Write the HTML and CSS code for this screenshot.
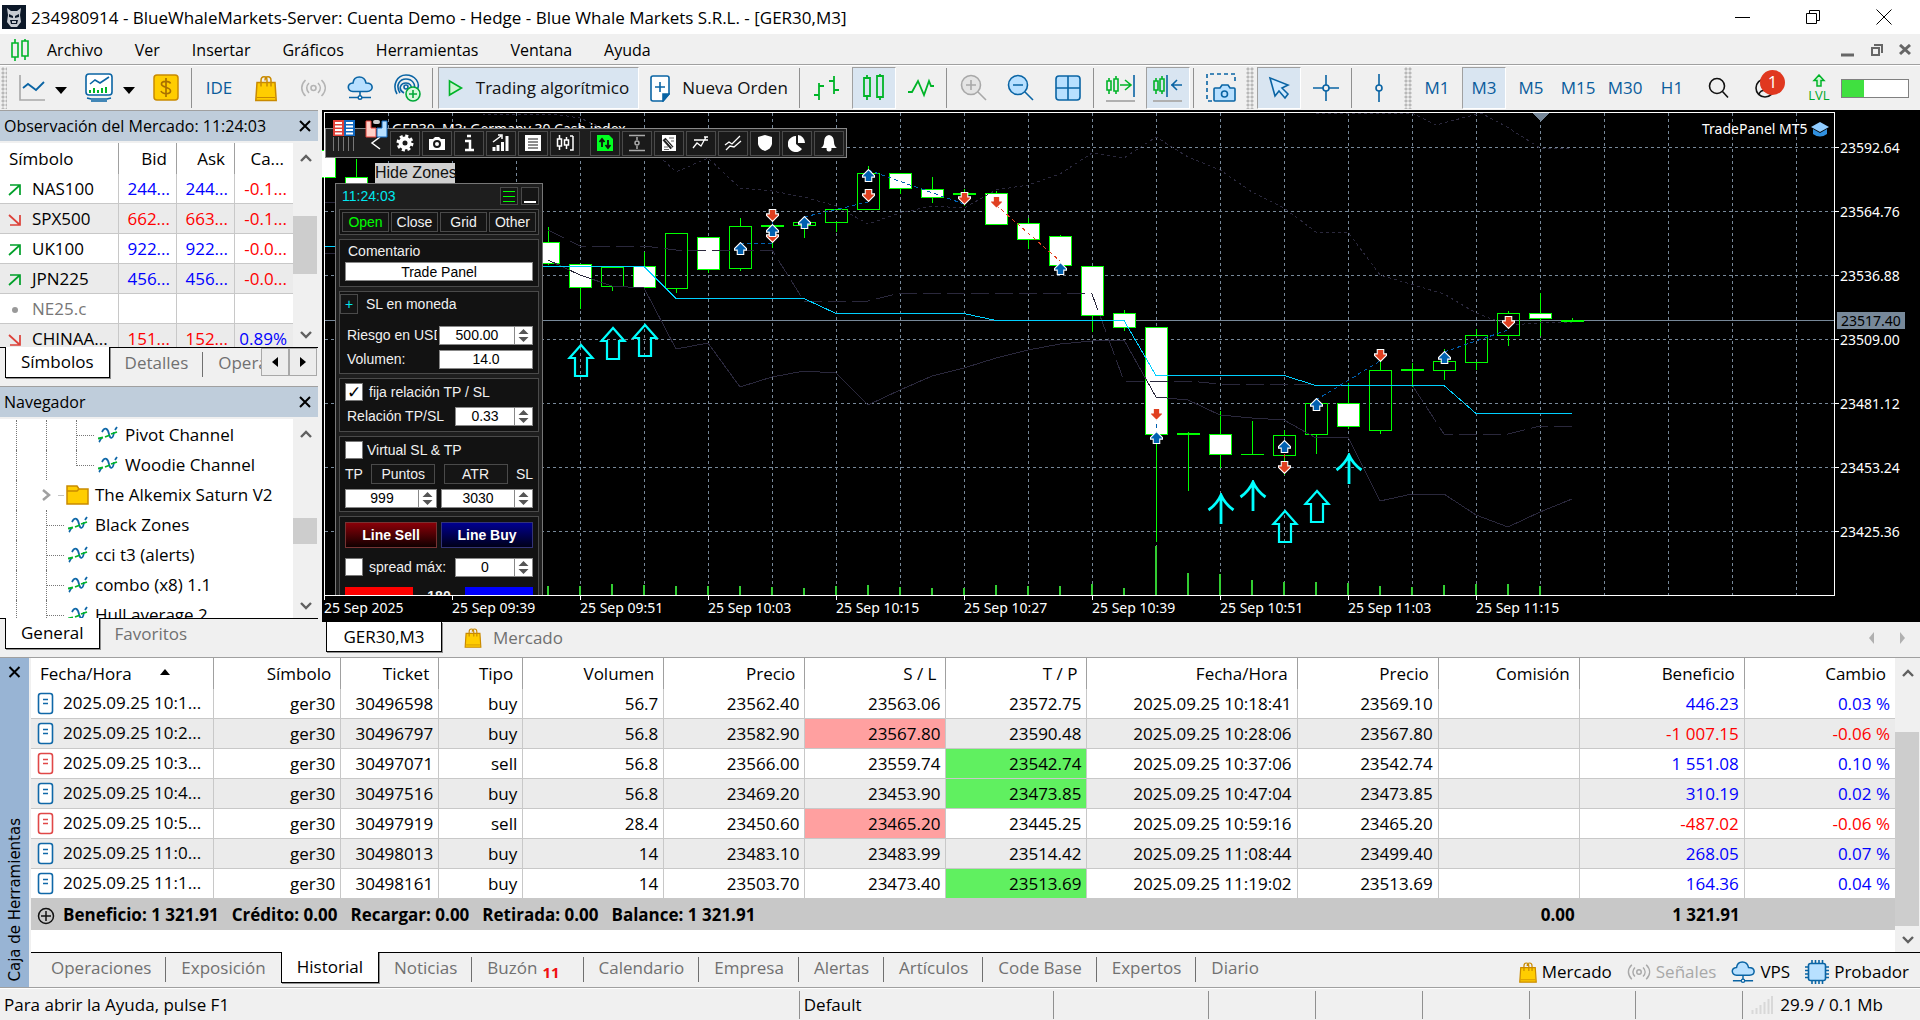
FILE: index.html
```html
<!DOCTYPE html>
<html lang="es">
<head>
<meta charset="utf-8">
<title>234980914 - BlueWhaleMarkets-Server</title>
<link rel="stylesheet" href="styles.css">
</head>
<body>
<svg class="defs" width="0" height="0" aria-hidden="true">
  <defs>
    <symbol id="bag" viewBox="0 0 22 26"><path d="M2 7h18l1.200 18H.8z" fill="#ffcd00" stroke="#c98a00" stroke-width="1.500"/><path d="M6 11V5c0-5 6-5 6 0v6M10 5c0-5 6-5 6 0v6" fill="none" stroke="#c98a00" stroke-width="1.500"/><path d="M2 22h18" stroke="#c98a00"/></symbol>
    <symbol id="signal" viewBox="0 0 26 20"><g fill="none" stroke="currentColor" stroke-width="1.600"><circle cx="13" cy="10" r="2.500"/><path d="M8.500 5c-3 3-3 7 0 10M17.500 5c3 3 3 7 0 10M5 2c-5 5-5 11 0 16M21 2c5 5 5 11 0 16"/></g></symbol>
    <symbol id="cloud" viewBox="0 0 26 24"><path d="M6 15.500c-6-.5-6.500-8 0-8.500 1-8 11.500-8 13 0 8 0 8 8 1 8.500z" fill="#b8e0ff" stroke="#0a64a4" stroke-width="1.600"/><path d="M13 16v4M2 21.500h9M15 21.500h9" stroke="#0a64a4" stroke-width="1.600"/><circle cx="13" cy="21.500" r="1.800" fill="#fff" stroke="#0a64a4" stroke-width="1.400"/></symbol>
    <symbol id="chip" viewBox="0 0 24 24"><path d="M7 0v24M10.500 0v24M14 0v24M17.500 0v24M0 7h24M0 10.500h24M0 14h24M0 17.500h24" stroke="#0a64a4" stroke-width="1.600"/><rect x="3.500" y="3.500" width="17" height="17" rx="2" fill="#b8e0ff" stroke="#0a64a4" stroke-width="1.600"/></symbol>
    <symbol id="doc" viewBox="0 0 18 24"><rect x="1.500" y="1.500" width="14" height="20" rx="2.500" fill="#fff" stroke="currentColor" stroke-width="1.600"/><path d="M6 7.500h5M6 11.500h5" stroke="currentColor" stroke-width="1.500"/></symbol>
    <symbol id="ind" viewBox="0 0 20 18"><path d="M1 16c1-1 1-3 3-4M4 6c3-6 6-3 7 2s4 6 5-2M17 4l2-3" fill="none" stroke="#1068a8" stroke-width="1.800"/><path d="M0 12.500l5-1M7 11l5-2M13 8l6-2" fill="none" stroke="#00b428" stroke-width="1.800"/></symbol>
    <symbol id="up" viewBox="0 0 12 12"><path d="M6 .5l5.500 5.500v1.500H9v4H3v-4H.5V6z" fill="#0060b0" stroke="#fff"/></symbol>
    <symbol id="down" viewBox="0 0 12 12"><path d="M6 11.500L.5 6V4.500H3v-4h6v4h2.500V6z" fill="#e04020" stroke="#fff"/></symbol>
    <symbol id="spin" viewBox="0 0 16 17"><path d="M3 7l5-5 5 5zM3 10l5 5 5-5z" fill="#555"/></symbol>
    <symbol id="nw" viewBox="0 0 14 14"><path d="M2 2h10v10M12 2L1 12" fill="none" stroke="#00a02a" stroke-width="1.700"/></symbol>
    <symbol id="sw" viewBox="0 0 14 14"><path d="M2 12h10V2M12 12L1 2" fill="none" stroke="#dd4038" stroke-width="1.700"/></symbol>
    <symbol id="chev" viewBox="0 0 12 8"><path d="M1 7l5-5 5 5" fill="none" stroke="#606060" stroke-width="2.400"/></symbol>
    <symbol id="close" viewBox="0 0 12 12"><path d="M1 1l10 10M11 1L1 11" stroke="currentColor" stroke-width="2"/></symbol>
    <symbol id="outarrow" viewBox="0 0 28 35"><path d="M14 2L2.500 15H8v18h12V15h5.500z" fill="none" stroke="#00ffff" stroke-width="2.200"/></symbol>
    <symbol id="linearrow" viewBox="0 0 28 31"><path d="M14 2v29M1.500 17C7 13 11 9 14 2c3 7 7 11 12.500 15" fill="none" stroke="#00ffff" stroke-width="2.800"/></symbol>
  </defs>
</svg>

<header class="titlebar">
  <svg class="app-icon" viewBox="0 0 24 24"><rect width="24" height="24" fill="#0c1828"/><path d="M5 3l4 3h6l4-3-1 7 1 7-4 5H9l-4-5 1-7z" fill="#c8ccd2"/><path d="M7 9l4 2v2l-4-1zM17 9l-4 2v2l4-1zM8 15h8l-1 4H9z" fill="#0c1828"/><path d="M10 16h4v2h-4z" fill="#c8ccd2"/></svg>
  <h1>234980914 - BlueWhaleMarkets-Server: Cuenta Demo - Hedge - Blue Whale Markets S.R.L. - [GER30,M3]</h1>
  <div class="win-buttons">
    <button aria-label="Minimizar"><svg width="16" height="16"><path d="M0 8.500h15" stroke="#000"/></svg></button>
    <button aria-label="Restaurar"><svg width="16" height="16" fill="none" stroke="#000"><path d="M1.500 4.500h10v10h-10zM4.500 4V1.500h10v10H12"/></svg></button>
    <button aria-label="Cerrar"><svg width="16" height="16"><path d="M.5.500l15 15M15.500.500l-15 15" stroke="#000"/></svg></button>
  </div>
</header>

<nav class="menubar">
  <svg class="menu-icon" viewBox="0 0 18 22" fill="none" stroke="#00b428" stroke-width="1.600"><path d="M4 0v4M4 18v4M14 0v2M14 17v4M1 4h6v14H1zM11 2h6v15h-6z"/></svg>
  <button>Archivo</button><button>Ver</button><button>Insertar</button><button>Gráficos</button><button>Herramientas</button><button>Ventana</button><button>Ayuda</button>
  <div class="mdi-buttons">
    <button aria-label="Minimizar gráfico"><svg width="14" height="14"><path d="M0 12h13" stroke="#666" stroke-width="3"/></svg></button>
    <button aria-label="Restaurar gráfico"><svg width="14" height="14" fill="none" stroke="#666" stroke-width="2"><path d="M2 5h7v7H2zM4 2h8v8"/></svg></button>
    <button aria-label="Cerrar gráfico"><svg width="13" height="12"><path d="M1 1l10 9M11 1L1 10" stroke="#666" stroke-width="3"/></svg></button>
  </div>
</nav>

<div class="toolbar">
  <span class="grip narrow"></span>
  <button class="tb wide" aria-label="Tipo de gráfico"><svg width="28" height="28" viewBox="0 0 28 28" fill="none"><path d="M2 1v25h25" stroke="#a8a8a8" stroke-width="1.600"/><path d="M5 14l5-4 8 6 8-8" stroke="#0a64a4" stroke-width="1.800"/></svg><i class="tri"></i></button>
  <button class="tb wide" aria-label="Indicadores"><svg width="30" height="30" viewBox="0 0 30 30" fill="none" stroke="#0a64a4" stroke-width="1.600"><rect x="2" y="1" width="26" height="21" rx="3" fill="#fff"/><path d="M3 25l4 1h16l4-1M7 28h16"/><path d="M6 11l5-4 5 3 9-6"/><path d="M6 20v-3M10 20v-5M14 20v-3M18 20v-5M22 20v-6" stroke="#00b428" stroke-width="2"/></svg><i class="tri"></i></button>
  <button class="tb" aria-label="Mercado"><svg width="26" height="28" viewBox="0 0 26 28"><rect x="1" y="1" width="24" height="25" rx="3" fill="#ffcd00" stroke="#c98a00" stroke-width="1.500"/><path d="M17.500 9.500c-1-3-9-3-9 .5 0 4 9 2.500 9 7 0 3.500-8 3.500-9.500 0M13 4v19" fill="none" stroke="#a87000" stroke-width="1.700"/></svg></button>
  <span class="sep"></span>
  <button class="tb">IDE</button>
  <button class="tb" aria-label="Tienda"><svg width="22" height="27"><use href="#bag"/></svg></button>
  <button class="tb off" aria-label="Señales"><svg width="27" height="20"><use href="#signal"/></svg></button>
  <button class="tb" aria-label="VPS"><svg width="26" height="24"><use href="#cloud"/></svg></button>
  <button class="tb" aria-label="Señal nueva"><svg width="28" height="28" viewBox="0 0 28 28" fill="none" stroke="#0a64a4" stroke-width="1.600"><path d="M4 20C-1 11 4 1 13 1s15 8 11 15M7 19C2 11 7 5 13 5s10 5 8 10M11 19c-7-4-3-10 2-10 4 0 6 3 5 6"/><circle cx="13" cy="13" r="2"/><circle cx="20" cy="20" r="7" fill="#d8f8dc" stroke="#00a838"/><path d="M20 16v8M16 20h8" stroke="#00a838"/></svg></button>
  <span class="sep"></span>
  <button class="tb trade on"><svg width="16" height="18"><path d="M1.500 2l12 7-12 7z" fill="#d0f4d4" stroke="#00b428" stroke-width="1.600"/></svg>Trading algorítmico</button>
  <button class="tb order"><svg width="20" height="27" viewBox="0 0 20 27"><path d="M3 1h14q2 0 2 2v16l-6 7H3q-2 0-2-2V3q0-2 2-2z" fill="#fff" stroke="#0a64a4" stroke-width="1.600"/><path d="M19 19l-6 7v-7zM5 12h10M10 7v10" stroke="#0a64a4" fill="#0a64a4" stroke-width="1.600"/></svg>Nueva Orden</button>
  <span class="sep"></span>
  <button class="tb" aria-label="Barras"><svg width="28" height="28" fill="none" stroke="#00b428" stroke-width="1.800"><path d="M6 9v17M1 21h5M6 12h5M21 2v18M16 7h5M21 16h5"/></svg></button>
  <button class="tb on" aria-label="Velas"><svg width="24" height="28" fill="none" stroke="#00b428" stroke-width="1.800"><path d="M5 1v3M5 22v4M18 0v2M18 23v3M2 4h6v18H2zM15 2h6v21h-6z"/></svg></button>
  <button class="tb" aria-label="Línea"><svg width="28" height="20" fill="none" stroke="#00b428" stroke-width="1.800"><path d="M1 14h4l6-11 6 14 5-14 2 5h3"/></svg></button>
  <span class="sep"></span>
  <button class="tb" aria-label="Acercar"><svg width="28" height="28" fill="#e4e4e4" stroke="#a8a8a8" stroke-width="1.600"><circle cx="11" cy="11" r="9.500"/><path d="M18 18l8 8M6 11h10M11 6v10"/></svg></button>
  <button class="tb" aria-label="Alejar"><svg width="28" height="28" fill="#b8e0ff" stroke="#0a64a4" stroke-width="1.600"><circle cx="11" cy="11" r="9.500"/><path d="M18 18l8 8M6 11h10"/></svg></button>
  <button class="tb" aria-label="Mosaico"><svg width="28" height="28" fill="#b8e0ff" stroke="#0a64a4" stroke-width="1.600"><rect x="2" y="2" width="24" height="24" rx="3"/><path d="M14 2v24M2 14h24"/></svg></button>
  <span class="sep"></span>
  <button class="tb" aria-label="Desplazar al final"><svg width="30" height="30" fill="none" stroke="#00b428" stroke-width="1.600"><path d="M3 5v3M3 17v4M1 8h4v9H1zM10 3v3M10 18v3M8 6h4v12H8zM14 12h11M19 7l6 5-6 5"/><path d="M28 2v22" stroke="#0a64a4"/><path d="M0 28h29" stroke="#b0b0b0" stroke-width="2"/></svg></button>
  <button class="tb on" aria-label="Desplazar gráfico"><svg width="30" height="30" fill="none" stroke="#00b428" stroke-width="1.600"><path d="M3 5v3M3 17v4M1 8h4v9H1zM9 3v3M9 18v3M7 6h4v12H7z"/><path d="M14 2v22M18 12h11M24 7l-5 5 5 5" stroke="#0a64a4"/><path d="M0 28h29" stroke="#b0b0b0" stroke-width="2"/></svg></button>
  <span class="sep"></span>
  <button class="tb" aria-label="Captura"><svg width="30" height="30" fill="#b8e0ff" stroke="#0a64a4" stroke-width="1.600"><path d="M6 28H1V1h28v8" fill="none" stroke-dasharray="4 3"/><path d="M10 15h4l2-3h6l2 3h4q1 0 1 1v11q0 1-1 1H9q-1 0-1-1V16q0-1 1-1z"/><circle cx="18.500" cy="21" r="3"/></svg></button>
  <span class="grip"></span>
  <button class="tb on" aria-label="Cursor"><svg width="24" height="24" fill="#d0eaff" stroke="#0a64a4" stroke-width="1.600"><path d="M3 2l18 7-6 3 6 6-3 4-6-7-4 5z"/></svg></button>
  <button class="tb" aria-label="Cruz"><svg width="28" height="28" fill="none" stroke="#0a64a4" stroke-width="1.600"><path d="M14 1v10M14 17v10M1 14h10M17 14h10"/><circle cx="14" cy="14" r="3"/></svg></button>
  <span class="sep"></span>
  <button class="tb" aria-label="Línea vertical"><svg width="12" height="30" fill="none" stroke="#0a64a4" stroke-width="1.600"><path d="M6 1v11M6 18v11"/><circle cx="6" cy="15" r="3"/></svg></button>
  <span class="grip"></span>
  <button class="tb">M1</button><button class="tb on">M3</button><button class="tb">M5</button><button class="tb">M15</button><button class="tb">M30</button><button class="tb">H1</button>
  <button class="tb" aria-label="Buscar"><svg width="22" height="22" fill="none" stroke="#111" stroke-width="1.600"><circle cx="9" cy="9" r="7.500"/><path d="M14.500 14.500l5.500 6"/></svg></button>
  <button class="tb user" aria-label="Cuenta"><svg width="22" height="22" fill="none" stroke="#111" stroke-width="1.600"><circle cx="10" cy="11" r="9"/><circle cx="10" cy="8" r="3.500"/><path d="M4 17c2-5 10-5 12 0"/></svg><span class="badge">1</span></button>
  <div class="level"><svg width="14" height="14"><path d="M7 1l5 5.500H9V12H5V6.500H2z" fill="#d0f4d4" stroke="#00b428" stroke-width="1.500"/></svg>LVL</div>
  <div class="meter"><span></span></div>
</div>

<main class="workspace">
  <aside class="docks">
    <section class="dock market">
      <h2>Observación del Mercado: 11:24:03<button aria-label="Cerrar"><svg width="12" height="12"><use href="#close"/></svg></button></h2>
      <div class="dock-body">
        <div class="clip">
          <table class="quotes">
            <thead><tr><th>Símbolo</th><th>Bid</th><th>Ask</th><th>Ca...</th></tr></thead>
            <tbody>
              <tr class="rise"><td><svg width="14" height="14"><use href="#nw"/></svg>NAS100</td><td>244...</td><td>244...</td><td class="neg">-0.1...</td></tr>
              <tr class="fall"><td><svg width="14" height="14"><use href="#sw"/></svg>SPX500</td><td>662...</td><td>663...</td><td class="neg">-0.1...</td></tr>
              <tr class="rise"><td><svg width="14" height="14"><use href="#nw"/></svg>UK100</td><td>922...</td><td>922...</td><td class="neg">-0.0...</td></tr>
              <tr class="rise"><td><svg width="14" height="14"><use href="#nw"/></svg>JPN225</td><td>456...</td><td>456...</td><td class="neg">-0.0...</td></tr>
              <tr class="idle"><td><svg width="14" height="14"><circle cx="7" cy="7" r="3" fill="#999"/></svg>NE25.c</td><td></td><td></td><td></td></tr>
              <tr class="fall"><td><svg width="14" height="14"><use href="#sw"/></svg>CHINAA...</td><td>151...</td><td>152...</td><td class="pos">0.89%</td></tr>
            </tbody>
          </table>
        </div>
        <div class="scroll"><svg width="12" height="8"><use href="#chev"/></svg><span class="thumb market-thumb"></span><svg class="flip" width="12" height="8"><use href="#chev"/></svg></div>
      </div>
      <div class="tabs">
        <button class="tab active">Símbolos</button><button class="tab">Detalles</button><button class="tab cut">Operaciones</button>
        <div class="tab-scroll"><button aria-label="Anterior"><svg width="8" height="12"><path d="M7 1v10L1 6z"/></svg></button><button aria-label="Siguiente"><svg width="8" height="12"><path d="M1 1v10l6-5z"/></svg></button></div>
      </div>
    </section>
    <section class="dock navigator">
      <h2>Navegador<button aria-label="Cerrar"><svg width="12" height="12"><use href="#close"/></svg></button></h2>
      <div class="dock-body">
        <div class="clip">
          <ul class="tree">
            <li><i class="g"></i><i class="g"></i><i class="g elbow"></i><svg width="20" height="18"><use href="#ind"/></svg>Pivot Channel</li>
            <li><i class="g"></i><i class="g"></i><i class="g elbow last"></i><svg width="20" height="18"><use href="#ind"/></svg>Woodie Channel</li>
            <li class="folder"><i class="g"></i><svg class="expander" width="26" height="16"><path d="M2 3l6 5-6 5" fill="none" stroke="#a0a0a0" stroke-width="2.500"/><path d="M17.500 8.500h6" stroke="#888" stroke-dasharray="1 1"/></svg><svg width="23" height="20"><path d="M1 1h10l2 3h9v15H1z" fill="#ffcd00" stroke="#c98a00" stroke-width="1.500"/><path d="M1 6h10l2-2" fill="none" stroke="#c98a00" stroke-width="1.500"/></svg>The Alkemix Saturn V2</li>
            <li><i class="g"></i><i class="g elbow"></i><svg width="20" height="18"><use href="#ind"/></svg>Black Zones</li>
            <li><i class="g"></i><i class="g elbow"></i><svg width="20" height="18"><use href="#ind"/></svg>cci t3 (alerts)</li>
            <li><i class="g"></i><i class="g elbow"></i><svg width="20" height="18"><use href="#ind"/></svg>combo (x8) 1.1</li>
            <li><i class="g"></i><i class="g elbow"></i><svg width="20" height="18"><use href="#ind"/></svg>Hull average 2</li>
          </ul>
        </div>
        <div class="scroll"><svg width="12" height="8"><use href="#chev"/></svg><span class="thumb nav-thumb"></span><svg class="flip" width="12" height="8"><use href="#chev"/></svg></div>
      </div>
      <div class="tabs"><button class="tab active">General</button><button class="tab">Favoritos</button></div>
    </section>
  </aside>

  <section class="chart-area">
    <div class="chart">
      <svg class="plot" viewBox="322 110 1598 512" preserveAspectRatio="xMinYMin slice" shape-rendering="crispEdges">
        <path class="grid" d="M388.500 113V595M452.500 113V595M516.500 113V595M580.500 113V595M644.500 113V595M708.500 113V595M772.500 113V595M836.500 113V595M900.500 113V595M964.500 113V595M1028.500 113V595M1092.500 113V595M1156.500 113V595M1220.500 113V595M1284.500 113V595M1348.500 113V595M1412.500 113V595M1476.500 113V595M1540.500 113V595M1604.500 113V595M1668.500 113V595M1732.500 113V595M1796.500 113V595"/>
        <path class="grid" d="M325 147.500H1834M325 211.500H1834M325 275.500H1834M325 339.500H1834M325 403.500H1834M325 467.500H1834M325 531.500H1834"/>
        <path d="M325 320.500H1834" stroke="#778899"/>
        <path class="wick" d="M356.500 159V190M548.500 227V265M580.500 287V309M612.500 287V291M644.500 252V266M676.500 288V293M708.500 269V273M740.500 218V226M740.500 268V271M772.500 218V248M804.500 225V238M836.500 223V232M868.500 166V173M900.500 189V194M932.500 177V203M964.500 189V206M996.500 191V193M1028.500 218V249M1060.500 235V237M1092.500 316V332M1124.500 310V331M1156.500 435V542M1188.500 432V491M1220.500 411V468M1252.500 421V454M1284.500 430V435M1284.500 456V475M1316.500 435V454M1348.500 383V429M1380.500 361V370M1380.500 430V434M1412.500 363V387M1444.500 349V361M1444.500 371V380M1476.500 329V335M1476.500 363V370M1508.500 311V313M1508.500 336V346M1540.500 293V336M1572.500 318V322"/>
        <path class="bear" d="M313.500 150.500h22v27h-22zM345.500 177.500h22v40h-22zM537.500 242.500h22v21h-22zM569.500 264.500h22v23h-22zM633.500 266.500h22v21h-22zM697.500 237.500h22v32h-22zM889.500 173.500h22v15h-22zM921.500 189.500h22v8h-22zM985.500 193.500h22v31h-22zM1017.500 223.500h22v16h-22zM1049.500 236.500h22v29h-22zM1081.500 266.500h22v49h-22zM1113.500 313.500h22v14h-22zM1145.500 327.500h22v107h-22zM1209.500 434.500h22v20h-22zM1337.500 403.500h22v23h-22zM1529.500 313.500h22v5h-22z"/>
        <path class="bull" d="M601.500 267.500h22v19h-22zM665.500 233.500h22v55h-22zM729.500 226.500h22v42h-22zM793.500 222.500h22v3h-22zM825.500 209.500h22v13h-22zM857.500 173.500h22v36h-22zM1273.500 435.500h22v20h-22zM1305.500 403.500h22v31h-22zM1369.500 370.500h22v60h-22zM1433.500 361.500h22v9h-22zM1465.500 335.500h22v27h-22zM1497.500 313.500h22v22h-22z"/>
        <path d="M761 226h23M953 194h23M1177 434h23M1401 370h23M1561 321h23" stroke="#00ff00" stroke-width="2"/>
        <path d="M1241 454.500h23" stroke="#00ff00"/>
        <path class="vol" d="M548 586v9M580 586v9M612 584v11M644 585v10M676 586v9M708 586v9M740 586v9M772 587v8M804 588v7M836 586v9M868 585v10M900 587v8M932 588v7M964 588v7M996 585v10M1028 586v9M1060 586v9M1092 584v11M1124 588v7M1156 546v49M1188 573v22M1220 574v21M1252 580v15M1284 582v13M1316 582v13M1348 583v12M1380 586v9M1412 587v8M1444 585v10M1476 584v11M1508 584v11M1540 586v9"/>
        <g class="band">
          <path d="M482 114l78 1 20 3 20 9 60 30 16 15 32-14 32 30 32 3 32 6 32 9 32 18 32-11 32-7 32 2 32-18 32-5 32-11 32-21 32 5 32-21 32 20 32 13 32 22 32 16 32 24h32l32 43 64 19 32 19 32 12 32-2 32-1" stroke-dasharray="3 3"/>
          <path d="M1316 113h96l24 12 45-12 26 14 33 21h32" stroke-dasharray="3 3"/>
          <path d="M325 253h10M548 230l32 16h64l32 4h96l32 51h64l32-8h96l96 1 32 87h64l32 3h64l32 1h96l32 49h64l32-8h32" stroke-dasharray="18 6"/>
          <path d="M325 202h10M548 260l32 15 32 11 32 2 32 61 32-6 32 44 32-10 32-6 32 2 32 32 32-15 32-14 32-8 32-10 32-8 32-6 32-3 32-1 32 57 32 3 32 15 32 3 32 2 32 18 32-1 32 64 32-7h32l32 21 32 12 32-15 32-13"/>
        </g>
        <path d="M324 246.500h11M535 266.500h109l32 32h128l32 15h128l32 7h128l32 55h128l32 10h128l32 28h96" fill="none" stroke="#00d0ff"/>
        <path class="deal" d="M740 243h32v-30M804 217l64-15M868 170l96 34M1156 435v-22M1316 400l64-39M1444 352l64-22"/>
        <path class="deal loss" d="M996 205l64 56M1284 440v30"/>
        <g shape-rendering="auto">
          <use href="#up" x="734" y="242" width="13" height="13"/><use href="#down" x="766" y="209" width="13" height="13"/><use href="#down" x="766" y="230" width="13" height="13"/><use href="#up" x="766" y="224" width="13" height="13"/><use href="#up" x="798" y="216" width="13" height="13"/><use href="#up" x="862" y="169" width="13" height="13"/><use href="#down" x="862" y="189" width="13" height="13"/><use href="#down" x="958" y="192" width="13" height="13"/><use href="#down" x="990" y="196" width="13" height="13"/><use href="#up" x="1054" y="262" width="13" height="13"/><use href="#down" x="1150" y="408" width="13" height="13"/><use href="#up" x="1150" y="431" width="13" height="13"/><use href="#up" x="1278" y="440" width="13" height="13"/><use href="#down" x="1278" y="461" width="13" height="13"/><use href="#up" x="1310" y="398" width="13" height="13"/><use href="#down" x="1374" y="349" width="13" height="13"/><use href="#up" x="1438" y="351" width="13" height="13"/><use href="#down" x="1502" y="316" width="13" height="13"/>
          <use href="#outarrow" x="567" y="343" width="28" height="35"/><use href="#outarrow" x="599" y="326" width="28" height="35"/><use href="#outarrow" x="631" y="323" width="28" height="35"/><use href="#outarrow" x="1271" y="509" width="28" height="35"/><use href="#outarrow" x="1303" y="489" width="28" height="35"/>
          <use href="#linearrow" x="1207" y="493" width="28" height="31"/><use href="#linearrow" x="1239" y="480" width="28" height="31"/><use href="#linearrow" x="1335" y="453" width="28" height="31"/>
        </g>
        <path d="M324.500 595V112.500H1834.500V595.500H324M324.500 595v5M452.500 595v5M580.500 595v5M708.500 595v5M836.500 595v5M964.500 595v5M1092.500 595v5M1220.500 595v5M1348.500 595v5M1476.500 595v5M1834 147.500h5M1834 211.500h5M1834 275.500h5M1834 339.500h5M1834 403.500h5M1834 467.500h5M1834 531.500h5" fill="none" stroke="#fff"/>
        <path d="M1532 113h17l-8 8z" fill="#778899"/>
        <rect x="1837" y="312" width="68" height="17" fill="#778899"/>
        <g class="axis">
          <text x="1840" y="153">23592.64</text><text x="1840" y="217">23564.76</text><text x="1840" y="281">23536.88</text><text x="1840" y="345">23509.00</text><text x="1840" y="409">23481.12</text><text x="1840" y="473">23453.24</text><text x="1840" y="537">23425.36</text>
          <text x="1841" y="326" class="now">23517.40</text>
          <text x="324" y="613">25 Sep 2025</text><text x="452" y="613">25 Sep 09:39</text><text x="580" y="613">25 Sep 09:51</text><text x="708" y="613">25 Sep 10:03</text><text x="836" y="613">25 Sep 10:15</text><text x="964" y="613">25 Sep 10:27</text><text x="1092" y="613">25 Sep 10:39</text><text x="1220" y="613">25 Sep 10:51</text><text x="1348" y="613">25 Sep 11:03</text><text x="1476" y="613">25 Sep 11:15</text>
          <text x="1702" y="134">TradePanel MT5</text>
          <text x="392" y="134">GER30, M3:  Germany 30 Cash index</text>
        </g>
        <g shape-rendering="auto"><path d="M1811 127l9-5 9 5-9 5z" fill="#90ccff"/><path d="M1813 129v5q7 5 14 0v-5l-7 4z" fill="#3090e0"/></g>
      </svg>

      <div class="chart-badges">
        <svg width="22" height="16" viewBox="0 0 22 16"><rect width="11" height="16" fill="#e04038"/><rect x="11" width="11" height="16" fill="#1068c0"/><path d="M2 3h7M2 6.500h7M2 10h7M2 13.500h7M13 3h7M13 6.500h7M13 10h7M13 13.500h7" stroke="#fff" stroke-width="2"/></svg>
        <svg width="23" height="18" viewBox="0 0 23 18"><path d="M1 1h5v7h5v9H1z" fill="#ffd0c8" stroke="#e04038"/><path d="M22 1h-5v7h-5v9h10z" fill="#b8e0ff" stroke="#1068c0"/><rect x="8" y="0" width="7" height="4" rx="2" fill="#ccc"/></svg>
      </div>
      <div class="strip">
        <span class="hatch"></span>
        <button class="plain" aria-label="Plegar"><svg width="12" height="16"><path d="M10 2L2 8l8 6" fill="none" stroke="#fff" stroke-width="1.500"/></svg></button>
        <button aria-label="Ajustes"><svg width="18" height="18"><circle cx="9" cy="9" r="4.500" fill="none" stroke="#fff" stroke-width="4"/><circle cx="9" cy="9" r="7" fill="none" stroke="#fff" stroke-width="3" stroke-dasharray="3 2.500"/></svg></button>
        <button aria-label="Foto"><svg width="18" height="16"><path d="M1 4h4l2-2h4l2 2h4v11H1z" fill="#fff"/><circle cx="9" cy="9" r="3" fill="#fff" stroke="#1a1a1a" stroke-width="2"/></svg></button>
        <button aria-label="Información"><svg width="10" height="18"><path d="M3 2h4M1 7h5v9M1 16h9" stroke="#fff" stroke-width="2.500" fill="none"/></svg></button>
        <button aria-label="Estadística"><svg width="18" height="18"><path d="M2 13v4M6 11v6M10.500 8v9M15 2v15" stroke="#fff" stroke-width="3"/><path d="M1 8l8-6M6 1h4v4" stroke="#fff" stroke-width="1.500" fill="none"/></svg></button>
        <button aria-label="Lista"><svg width="18" height="18"><rect x="1" y="1" width="16" height="16" fill="#fff"/><path d="M4 5h10M4 8h10M4 11h10M4 14h10" stroke="#1a1a1a"/></svg></button>
        <button aria-label="Velas"><svg width="18" height="18" fill="none" stroke="#fff"><path d="M3.500 1v4M3.500 12v4M1.500 5h4v7h-4zM10.500 3v3M10.500 11v4M8.500 6h4v5h-4zM17 2v14h-3M14 2h3" stroke-width="1.500"/></svg></button>
        <button class="group" aria-label="Órdenes"><svg width="18" height="18"><path d="M1 1h12l4 4v12H1z" fill="#00ff20"/><path d="M6 13V6M3.500 8L6 5l2.500 3M12 6v7M9.500 11l2.500 3 2.500-3" fill="none" stroke="#111" stroke-width="1.800"/></svg></button>
        <button aria-label="Rango"><svg width="18" height="18" stroke="#aaa" fill="none" stroke-width="1.500"><path d="M1 1.500h16M1 16.500h16M9 3v3M9 12v3"/><circle cx="9" cy="9" r="2"/></svg></button>
        <button aria-label="Notas"><svg width="18" height="18"><path d="M2 1h14v16H2z" fill="#fff"/><path d="M4 5l8 9" stroke="#222" stroke-width="4"/><path d="M5.500 6l7 8" stroke="#ddd"/><path d="M4 13h4M4 15.500h5M9 4h5M11 7h3" stroke="#666"/></svg></button>
        <button aria-label="Tendencia"><svg width="18" height="18" stroke="#fff" fill="none" stroke-width="1.300"><path d="M1 14l4-5 4 3 5-9M2 6h14M12 3h4"/></svg></button>
        <button aria-label="Canal"><svg width="18" height="18" stroke="#fff" fill="none" stroke-width="1.300"><path d="M1 11l4-3 3 2 8-8M2 16l4-4 4 1 7-6"/></svg></button>
        <button aria-label="Protección"><svg width="16" height="18"><path d="M8 1l7 2v7q-1 5-7 7-6-2-7-7V3z" fill="#fff"/></svg></button>
        <button aria-label="Reparto"><svg width="18" height="18"><path d="M8 2v8l6 5A8 8 0 1 1 8 2z" fill="#fff"/><path d="M10 1a8 8 0 0 1 7 8h-7z" fill="#fff"/></svg></button>
        <button aria-label="Alerta"><svg width="16" height="18"><path d="M8 1q5 1 5 7 0 4 3 6H0q3-2 3-6 0-6 5-7z" fill="#fff"/><circle cx="8" cy="15" r="2.500" fill="#fff"/></svg></button>
      </div>
      <div class="tip">Hide Zones</div>

      <form class="trade-panel">
        <div class="tp-head"><span class="clock">11:24:03</span><button type="button" aria-label="Menú"><svg width="14" height="14"><path d="M1 2.500h12M1 7.500h12M1 12.500h12" stroke="#00ff00"/></svg></button><button type="button" aria-label="Minimizar panel"><svg width="14" height="14"><path d="M1 13h12" stroke="#fff" stroke-width="2"/></svg></button></div>
        <div class="box modes"><button type="button" class="sel">Open</button><button type="button">Close</button><button type="button">Grid</button><button type="button">Other</button></div>
        <div class="box note"><label for="cm">Comentario</label><input id="cm" value="Trade Panel"></div>
        <div class="box risk">
          <div class="row"><button type="button" class="plus">+</button><span>SL en moneda</span></div>
          <div class="row"><label for="rk">Riesgo en USD</label><span class="num n94"><input id="rk" value="500.00"><svg><use href="#spin"/></svg></span></div>
          <div class="row"><label for="vl">Volumen:</label><span class="num n94"><input id="vl" value="14.0"></span></div>
        </div>
        <div class="box ratio">
          <div class="row"><input type="checkbox" id="fx" checked><label for="fx">fija relación TP / SL</label></div>
          <div class="row"><label for="rl">Relación TP/SL</label><span class="num n78"><input id="rl" value="0.33"><svg><use href="#spin"/></svg></span></div>
        </div>
        <div class="box virtual">
          <div class="row"><input type="checkbox" id="vt"><label for="vt">Virtual SL &amp; TP</label></div>
          <div class="row units"><label for="tp">TP</label><button type="button">Puntos</button><button type="button">ATR</button><label for="sl">SL</label></div>
          <div class="row pair"><span class="num n92"><input id="tp" value="999"><svg><use href="#spin"/></svg></span><span class="num n92"><input id="sl" value="3030"><svg><use href="#spin"/></svg></span></div>
        </div>
        <div class="box orders">
          <div class="row pair"><button type="button" class="sell">Line Sell</button><button type="button" class="buy">Line Buy</button></div>
          <div class="row"><input type="checkbox" id="sp"><label for="sp">spread máx:</label><span class="num n78"><input aria-label="Spread máximo" value="0"><svg><use href="#spin"/></svg></span></div>
          <div class="row bars"><i class="red"></i><b>180</b><i class="blue"></i></div>
        </div>
      </form>
    </div>
    <div class="chart-tabs">
      <button class="tab active">GER30,M3</button>
      <button class="market-tab"><svg width="18" height="20"><use href="#bag"/></svg>Mercado</button>
      <span class="chart-nav"><svg width="6" height="12"><path d="M5 0v12L0 6z"/></svg><svg width="6" height="12"><path d="M1 0v12l5-6z"/></svg></span>
    </div>
  </section>
</main>

<section class="toolbox">
  <div class="spine"><button aria-label="Cerrar"><svg width="13" height="12"><use href="#close"/></svg></button><span>Caja de Herramientas</span></div>
  <div class="tool-main">
    <div class="dock-body">
      <div class="clip">
        <table class="history">
          <colgroup><col class="c183"><col class="c127"><col class="c98"><col class="c84"><col class="c141"><col class="c141"><col class="c141"><col class="c141"><col class="c210"><col class="c141"><col class="c141"><col class="c165"><col class="c150"></colgroup>
          <thead><tr><th>Fecha/Hora<i class="sort"></i></th><th>Símbolo</th><th>Ticket</th><th>Tipo</th><th>Volumen</th><th>Precio</th><th>S / L</th><th>T / P</th><th>Fecha/Hora</th><th>Precio</th><th>Comisión</th><th>Beneficio</th><th>Cambio</th></tr></thead>
          <tbody>
            <tr><td class="b"><svg width="18" height="24"><use href="#doc"/></svg>2025.09.25 10:1...</td><td>ger30</td><td>30496598</td><td>buy</td><td>56.7</td><td>23562.40</td><td>23563.06</td><td>23572.75</td><td>2025.09.25 10:18:41</td><td>23569.10</td><td></td><td class="pos">446.23</td><td class="pos">0.03 %</td></tr>
            <tr><td class="b"><svg width="18" height="24"><use href="#doc"/></svg>2025.09.25 10:2...</td><td>ger30</td><td>30496797</td><td>buy</td><td>56.8</td><td>23582.90</td><td class="sl">23567.80</td><td>23590.48</td><td>2025.09.25 10:28:06</td><td>23567.80</td><td></td><td class="neg">-1 007.15</td><td class="neg">-0.06 %</td></tr>
            <tr><td class="s"><svg width="18" height="24"><use href="#doc"/></svg>2025.09.25 10:3...</td><td>ger30</td><td>30497071</td><td>sell</td><td>56.8</td><td>23566.00</td><td>23559.74</td><td class="tp">23542.74</td><td>2025.09.25 10:37:06</td><td>23542.74</td><td></td><td class="pos">1 551.08</td><td class="pos">0.10 %</td></tr>
            <tr><td class="b"><svg width="18" height="24"><use href="#doc"/></svg>2025.09.25 10:4...</td><td>ger30</td><td>30497516</td><td>buy</td><td>56.8</td><td>23469.20</td><td>23453.90</td><td class="tp">23473.85</td><td>2025.09.25 10:47:04</td><td>23473.85</td><td></td><td class="pos">310.19</td><td class="pos">0.02 %</td></tr>
            <tr><td class="s"><svg width="18" height="24"><use href="#doc"/></svg>2025.09.25 10:5...</td><td>ger30</td><td>30497919</td><td>sell</td><td>28.4</td><td>23450.60</td><td class="sl">23465.20</td><td>23445.25</td><td>2025.09.25 10:59:16</td><td>23465.20</td><td></td><td class="neg">-487.02</td><td class="neg">-0.06 %</td></tr>
            <tr><td class="b"><svg width="18" height="24"><use href="#doc"/></svg>2025.09.25 11:0...</td><td>ger30</td><td>30498013</td><td>buy</td><td>14</td><td>23483.10</td><td>23483.99</td><td>23514.42</td><td>2025.09.25 11:08:44</td><td>23499.40</td><td></td><td class="pos">268.05</td><td class="pos">0.07 %</td></tr>
            <tr><td class="b"><svg width="18" height="24"><use href="#doc"/></svg>2025.09.25 11:1...</td><td>ger30</td><td>30498161</td><td>buy</td><td>14</td><td>23503.70</td><td>23473.40</td><td class="tp">23513.69</td><td>2025.09.25 11:19:02</td><td>23513.69</td><td></td><td class="pos">164.36</td><td class="pos">0.04 %</td></tr>
          </tbody>
          <tfoot><tr><td colspan="10"><svg width="18" height="18" fill="none" stroke="#111" stroke-width="1.500"><circle cx="9" cy="9" r="7.500"/><path d="M4 9h10M9 4v10"/></svg><span>Beneficio: 1 321.91</span><span>Crédito: 0.00</span><span>Recargar: 0.00</span><span>Retirada: 0.00</span><span>Balance: 1 321.91</span></td><td>0.00</td><td>1 321.91</td><td></td></tr></tfoot>
        </table>
      </div>
      <div class="scroll"><svg width="12" height="8"><use href="#chev"/></svg><span class="thumb tool-thumb"></span><svg class="flip" width="12" height="8"><use href="#chev"/></svg></div>
    </div>
    <div class="tabs">
      <button class="tab">Operaciones</button><button class="tab nosep">Exposición</button><button class="tab active">Historial</button><button class="tab">Noticias</button><button class="tab">Buzón<b>11</b></button><button class="tab">Calendario</button><button class="tab">Empresa</button><button class="tab">Alertas</button><button class="tab">Artículos</button><button class="tab">Code Base</button><button class="tab">Expertos</button><button class="tab nosep">Diario</button>
      <div class="services">
        <a href="#mercado"><svg width="18" height="21"><use href="#bag"/></svg>Mercado</a>
        <a href="#senales" class="off"><svg width="24" height="18"><use href="#signal"/></svg>Señales</a>
        <a href="#vps"><svg width="24" height="22"><use href="#cloud"/></svg>VPS</a>
        <a href="#probador"><svg width="24" height="24"><use href="#chip"/></svg>Probador</a>
      </div>
    </div>
  </div>
</section>

<footer class="status">
  <span>Para abrir la Ayuda, pulse F1</span><span>Default</span><span></span><span></span><span></span><span></span><span></span><span></span>
  <span class="traffic"><svg width="22" height="18"><path d="M1.500 18v-4M5.500 18v-6M9.500 18V9M13.500 18V6M17.500 18V3M21 18V0" stroke="#d8d8d8" stroke-width="2"/></svg>29.9 / 0.1 Mb</span>
</footer>
</body>
</html>
```
FILE: styles.css
```css
* { box-sizing: border-box; }
html, body { height: 100%; }
body {
  margin: 0;
  display: flex;
  flex-direction: column;
  overflow: hidden;
  background: #f0f0f0;
  color: #000;
  font: 17px/24px "Open Sans", "Noto Sans", sans-serif;
}
button {
  padding: 0;
  border: 0;
  background: none;
  color: inherit;
  font: inherit;
  white-space: nowrap;
}
svg { flex: none; display: block; }
.defs { position: absolute; }

/* title and menu */
.titlebar { flex: none; display: flex; align-items: center; height: 34px; background: #fff; }
.app-icon { width: 24px; height: 24px; margin: 0 5px 0 2px; }
.titlebar h1 { flex: 1; margin: 0; font-size: 17px; font-weight: 400; line-height: 28px; overflow: hidden; white-space: nowrap; padding-top: 2px; }
.win-buttons { display: flex; height: 34px; }
.win-buttons button { width: 70px; display: grid; place-items: center; }
.win-buttons button:last-child { width: 72px; }
.menubar { flex: none; display: flex; align-items: center; height: 32px; border-bottom: 1px solid #fff; box-shadow: inset 0 -1px #a0a0a0; font-size: 16px; }
.menu-icon { width: 18px; height: 22px; margin: 0 2px 0 11px; }
.menubar > button { padding: 0 16px; }
.mdi-buttons { display: flex; gap: 15px; margin: 0 8px 0 auto; }

/* toolbar */
.toolbar { flex: none; display: flex; align-items: center; gap: 3px; height: 44px; padding: 0 11px 0 1px; color: #0a5c9c; }
.tb { flex: none; display: flex; align-items: center; justify-content: center; width: 44px; height: 42px; position: relative; }
.tb.wide { width: 64px; gap: 9px; }
.tb.on { background: #d9e5f1; border: 1px solid; border-color: #a0a0a0 #fff #fff #a0a0a0; }
.tb.off { color: #b4b4b4; }
.tb.trade, .tb.order { color: #111; gap: 12px; }
.tb.trade { width: 201px; }
.tb.order { width: 154px; }
.tri { border: 6px solid transparent; border-top: 7px solid #000; border-bottom: 0; margin-top: 4px; }
.sep { flex: none; width: 3px; height: 40px; border-left: 1px solid #909090; }
.grip { flex: none; width: 8px; height: 42px; background: radial-gradient(circle, #b8b8b8 1px, transparent 2px) 0 0 / 4px 4px; }
.grip.narrow { width: 6px; }
.badge { position: absolute; right: 3px; top: 3px; width: 25px; height: 25px; border-radius: 50%; background: #e03820; color: #fff; line-height: 24px; }
.level { width: 38px; margin-left: auto; display: flex; flex-direction: column; align-items: center; color: #00a828; font-size: 13px; line-height: 14px; }
.meter { width: 68px; height: 19px; border: 1px solid #808080; background: #fff; }
.meter span { display: block; width: 34%; height: 100%; background: #40e040; }

/* docked panels */
.workspace { flex: 1; min-height: 0; display: flex; }
.docks { flex: none; width: 318px; display: flex; flex-direction: column; }
.dock { display: flex; flex-direction: column; min-height: 0; }
.market { flex: 276 1 0; }
.navigator { flex: 271 1 0; }
.dock h2 { flex: none; display: flex; align-items: center; justify-content: space-between; height: 31px; margin: 0 0 2px; padding: 0 7px 0 4px; background: #bfcddb; border-top: 1px solid #a0a0a0; font-size: 16px; font-weight: 400; }
.dock-body { flex: 1; min-height: 0; display: flex; background: #fff; }
.clip { flex: 1; min-width: 0; overflow: hidden; }
.scroll { flex: none; width: 25px; display: flex; flex-direction: column; align-items: center; background: #f0f0f0; padding: 11px 0 8px; position: relative; }
.scroll .flip { margin-top: auto; transform: rotate(180deg); }
.thumb { position: absolute; left: 0; right: 1px; background: #cdcdcd; }
.market-thumb { top: 73px; height: 58px; }
.nav-thumb { top: 99px; height: 26px; }
.tool-thumb { top: 74px; bottom: 26px; }

table { width: 100%; table-layout: fixed; border-collapse: separate; border-spacing: 0; }
th, td { height: 30px; padding: 0 5px; text-align: right; font-weight: 400; white-space: nowrap; overflow: hidden; }
th { height: 31px; padding: 0 9px; border-right: 1px solid #a0a0a0; }
td { border-right: 1px solid #c8c8c8; border-bottom: 1px solid #c8c8c8; }
th:first-child, td:first-child { text-align: left; }
tbody tr:nth-child(even) { background: #ebebeb; }
td svg { display: inline-block; vertical-align: middle; }
.pos { color: #00f; }
.neg { color: #f00; }
.quotes th:nth-child(n+2) { width: 58px; }
.quotes th:last-child, .quotes td:last-child { border-right: 0; }
.quotes td { padding: 0 6px 0 0; }
.quotes td:first-child { padding: 0 0 0 8px; }
.quotes td svg { margin-right: 10px; }
.rise td:nth-child(2), .rise td:nth-child(3) { color: #00f; }
.fall td:nth-child(2), .fall td:nth-child(3) { color: #f00; }
.idle { color: #777; }

.tabs { flex: none; display: flex; height: 39px; border-top: 1px solid #000; }
.tab { position: relative; height: 29px; padding: 0 15px; color: #707070; }
.tab:not(.active):not(.nosep)::after { content: ""; position: absolute; right: 0; top: 4px; bottom: 0; border-right: 1px solid #707070; }
.tab.active { margin-top: -1px; height: 31px; background: #fff; color: #000; border: solid #000; border-width: 0 1px 1px; box-shadow: 1px 1px #909090; }
.docks .tab.active { margin-left: 5px; }
.tab.cut { width: 58px; overflow: hidden; text-align: left; padding-right: 0; }
.market .tabs { padding-right: 1px; }
.market .tab.cut::after, .navigator .tab:last-child::after { display: none; }
.tab-scroll { display: flex; margin-left: auto; }
.tab-scroll button { width: 28px; height: 28px; border: 1px solid #a8a8a8; display: grid; place-items: center; background: #ececec; }

.tree { list-style: none; margin: 0; padding: 1px 0 0; }
.tree li { display: flex; align-items: center; height: 30px; padding-left: 16px; white-space: nowrap; }
.tree li > svg { margin-right: 7px; }
.g { flex: none; width: 30px; height: 30px; border-left: 1px dotted #777; position: relative; }
.elbow { width: 22px; }
.elbow::after { content: ""; position: absolute; left: 0; top: 15px; width: 17px; border-top: 1px dotted #777; }
.elbow.last { height: 16px; align-self: flex-start; }
.tree .folder .expander { margin: 0 -6px 0 -5px; }
.tree .folder svg:last-of-type { margin: 0 6px 0 5px; }

/* chart */
.chart-area { flex: 1; min-width: 0; margin-left: 4px; display: flex; flex-direction: column; }
.chart { flex: 1; min-height: 0; position: relative; overflow: hidden; background: #000; }
.plot { width: 100%; height: 100%; }
.grid { stroke: #778899; stroke-dasharray: 3 3; }
.wick { stroke: #0f0; }
.bear { fill: #fff; stroke: #0f0; }
.bull { fill: none; stroke: #0f0; }
.vol { stroke: #32cd32; stroke-width: 2; }
.band { fill: none; stroke: #2a283c; }
.deal { fill: none; stroke: #0060b0; stroke-dasharray: 4 3; }
.deal.loss { stroke: #e04020; }
.axis { fill: #fff; font: 14px "Noto Sans", sans-serif; }
.axis .now { fill: #000; }

.chart-badges { position: absolute; z-index: 1; left: 11px; top: 10px; display: flex; gap: 10px; }
.strip { position: absolute; left: 3px; top: 18px; width: 522px; height: 30px; display: flex; align-items: center; gap: 2px; padding: 0 2px 0 7px; background: #1e1e1e; border: 1px solid #888; }
.strip button { flex: none; width: 30px; height: 25px; border: 1px solid #4a4a4a; background: #1a1a1a; display: grid; place-items: center; }
.strip .plain { width: 32px; padding-left: 8px; border: 0; background: none; }
.strip .group { margin-left: 8px; }
.hatch { width: 21px; height: 14px; margin: 2px 0 0; background: repeating-linear-gradient(90deg, #777 0 1px, transparent 1px 5px); }
.tip { position: absolute; left: 53px; top: 53px; width: 80px; background: #d0d0d0; color: #111; font: 16px/20px "Liberation Sans", sans-serif; white-space: nowrap; }

.trade-panel { position: absolute; left: 13px; top: 73px; bottom: 27px; width: 208px; overflow: hidden; padding: 3px 3px 0; background: #1e1e1e; border: 1px solid #777; border-bottom: 0; color: #f0f0f0; font: 14px/18px "Liberation Sans", sans-serif; }
.trade-panel button { border: 1px solid #4a4a4a; background: #151515; }
.tp-head { display: flex; align-items: center; gap: 3px; height: 18px; padding-left: 3px; }
.tp-head button { width: 18px; height: 18px; display: grid; place-items: center; }
.clock { flex: 1; color: #00e8f0; }
.box { margin-top: 4px; padding: 4px 5px; border: 1px solid #4a4a4a; background: #121212; }
.modes { display: flex; gap: 2px; height: 26px; padding: 2px; }
.modes button { flex: 1; }
.modes .sel { color: #0f0; }
.note { height: 48px; padding-top: 2px; }
.note label { display: block; padding-left: 3px; }
.trade-panel input:not([type=checkbox]) { flex: 1; min-width: 0; width: 100%; height: 19px; padding: 0; border: 1px solid #888; background: #fff; color: #000; font: inherit; text-align: center; }
.note input { margin-top: 2px; }
.row { display: flex; align-items: center; height: 24px; }
.row > .num { margin-left: auto; }
.num { flex: none; display: flex; position: relative; }
.num svg { width: 18px; height: 19px; background: #fff; border: 1px solid #888; border-left: 0; }
.n94 { width: 94px; }
.n92 { width: 92px; }
.n78 { width: 78px; }
.risk { height: 83px; padding-top: 0; }
.risk label { width: 92px; padding-left: 2px; white-space: nowrap; overflow: hidden; }
.risk .row:first-child { margin-bottom: 7px; }
.plus { width: 18px; height: 20px; margin: 0 8px 0 -5px; color: #00e8f0; }
.ratio { height: 54px; padding-top: 1px; }
.ratio .row > label { padding-left: 2px; }
.row input[type=checkbox] { appearance: none; width: 18px; height: 18px; margin: 0 4px 0 0; border: 1px solid #777; background: #fff; display: grid; place-items: center; }
.row input[type=checkbox]:checked::after { content: "✓"; color: #000; font: bold 17px/17px "DejaVu Sans", sans-serif; }
.virtual { height: 76px; padding-top: 1px; }
.units { justify-content: space-between; }
.units button { width: 64px; height: 20px; }
.pair { justify-content: space-between; }
.pair > .num { margin-left: 0; }
.orders { height: 120px; }
.orders .row { height: 28px; }
.orders .row + .row { margin-top: 4px; }
.orders .pair button { width: 92px; height: 26px; font-weight: 700; color: #fff; }
.orders .sell { background: linear-gradient(#8a0008, #100000); border-color: #733; }
.orders .buy { background: linear-gradient(#000090, #000018); border-color: #337; }
.orders .row label { margin-left: 2px; }
.orders .bars { justify-content: space-between; align-items: flex-start; }
.orders .row.bars { margin-top: 6px; }
.bars i { width: 68px; height: 20px; }
.bars .red { background: #f00; }
.bars .blue { background: #00f; }

.chart-tabs { flex: none; display: flex; align-items: flex-start; height: 35px; padding-left: 4px; }
.chart-tabs .tab { width: 116px; height: 30px; margin: 0; padding: 0; }
.market-tab { display: flex; align-items: center; gap: 11px; height: 32px; margin-left: 22px; padding-right: 8px; color: #707070; }
.chart-nav { display: flex; gap: 24px; margin: 10px 15px 0 auto; fill: #b0b0b0; }

/* toolbox */
.toolbox { flex: none; display: flex; height: 331px; border-top: 1px solid #a0a0a0; border-bottom: 1px solid #a0a0a0; }
.spine { flex: none; width: 29px; margin-right: 2px; display: flex; flex-direction: column; align-items: center; justify-content: space-between; padding: 8px 0 6px; background: #98b4d4; }
.spine span { writing-mode: vertical-rl; transform: rotate(180deg); white-space: nowrap; font: 15px/24px "DejaVu Sans", sans-serif; }
.tool-main { flex: 1; min-width: 0; display: flex; flex-direction: column; }
.tool-main .tabs { height: 35px; padding-left: 5px; }
.c183 { width: 183px; } .c127 { width: 127px; } .c98 { width: 98px; } .c84 { width: 84px; }
.c141 { width: 141px; } .c210 { width: 210px; } .c165 { width: 165px; } .c150 { width: 150px; }
.history th:last-child, .history td:last-child { border-right: 0; }
.history td:first-child { padding-left: 6px; }
.history td:first-child svg { margin-right: 8px; }
.history .b svg { color: #1068a8; }
.history .s svg { color: #e04848; }
.sort { display: inline-block; margin-left: 28px; border: 5px solid transparent; border-bottom: 6px solid #000; border-top: 0; vertical-align: 5px; }
.sl { background: #ffa0a0; }
.tp { background: #60f060; }
.history tfoot td { height: 31px; border: 0; background: #c8c8c8; font-weight: 700; }
tfoot span { margin-right: 13px; }
.tab b { position: relative; top: 4px; margin: 0 9px 0 5px; color: #f01010; font-size: 15px; }
.services { display: flex; align-items: center; gap: 15px; margin: 4px 11px 0 auto; }
.services a { display: flex; align-items: center; gap: 5px; color: #000; text-decoration: none; }
.services .off { color: #a8a8a8; }

.status { flex: none; display: grid; grid-template-columns: 801fr 255fr 155fr repeat(5, 107fr) 177fr; align-items: center; height: 32px; border-top: 1px solid #fff; white-space: nowrap; }
.status span { height: 28px; display: flex; align-items: center; padding-left: 4px; border-right: 1px solid #909090; }
.status .traffic { gap: 7px; padding-left: 8px; border: 0; }
```
